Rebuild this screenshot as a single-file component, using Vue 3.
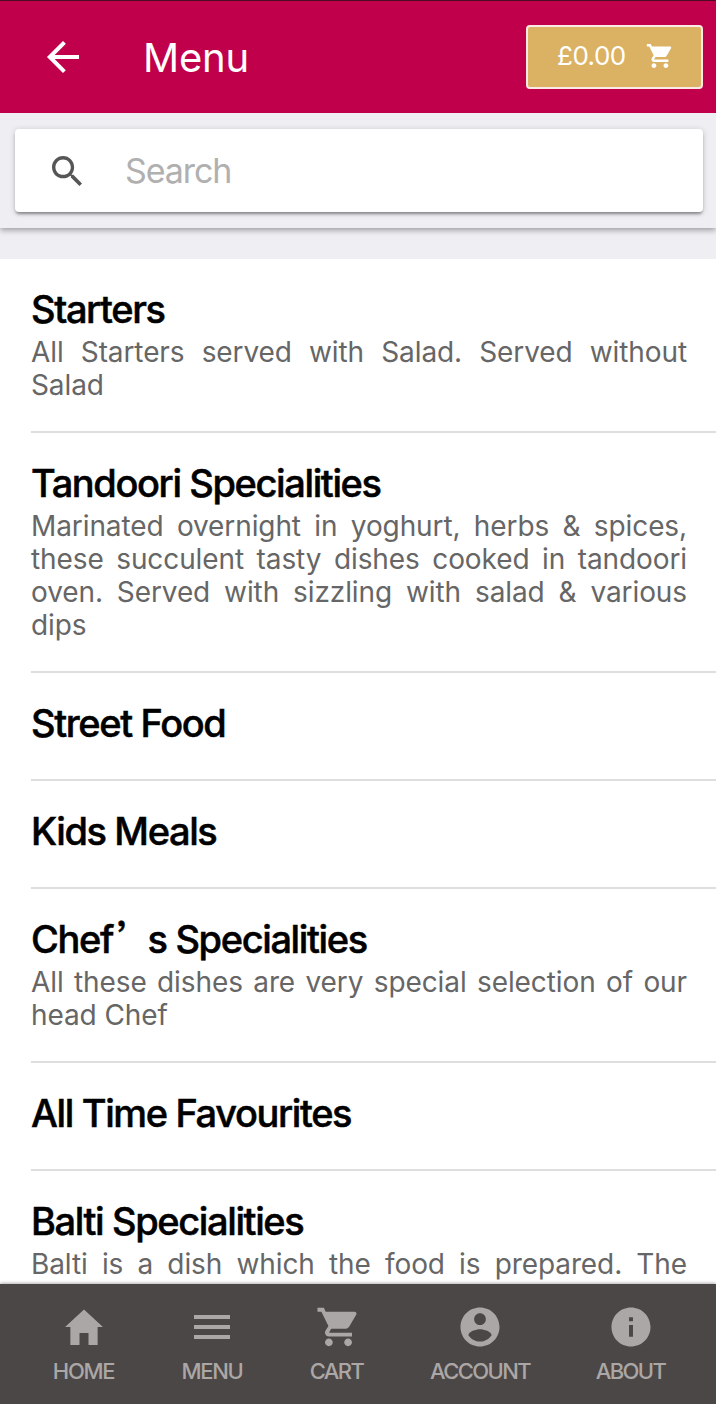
<template>
  <div class="page">
    <header class="header">
      <button class="back-btn" aria-label="Back">
        <svg viewBox="0 0 512 512"><path :d="icons.back" /></svg>
      </button>
      <h1>Menu</h1>
      <button class="cart-btn">
        <span>£0.00</span>
        <svg viewBox="0 0 512 512"><path :d="icons.cart" /></svg>
      </button>
    </header>

    <div class="search-area">
      <label class="search-box">
        <svg viewBox="0 0 512 512"><path :d="icons.search" /></svg>
        <input v-model="keyword" type="text" placeholder="Search" />
      </label>
    </div>

    <main class="content">
      <ul class="category-list">
        <li v-for="category in filteredCategories" :key="category.name">
          <h2>
            <template v-if="category.name.includes('’')"
              >{{ category.name.split("’")[0] }}<span class="quote">’</span
              >{{ category.name.split("’")[1] }}</template
            >
            <template v-else>{{ category.name }}</template>
          </h2>
          <p v-if="category.description" :class="{ full: category.full }">
            {{ category.description }}
          </p>
        </li>
      </ul>
    </main>

    <nav class="tab-bar">
      <button v-for="tab in tabs" :key="tab.label" :class="tab.icon">
        <svg viewBox="0 0 512 512"><path :d="icons[tab.icon]" /></svg>
        <span>{{ tab.label }}</span>
      </button>
    </nav>
  </div>
</template>

<script setup>
import { computed, ref } from "vue";

const keyword = ref("");

const icons = {
  back: "M427 234.625H167.296l119.702-119.702L256 85 85 256l171 171 29.922-29.924-118.626-119.701H427v-42.75z",
  search:
    "M337.509 305.372h-17.501l-6.571-5.486c20.791-25.232 33.922-57.054 33.922-93.257C347.358 127.632 283.896 64 205.135 64 127.452 64 64 127.632 64 206.629s63.452 142.628 142.225 142.628c35.011 0 67.831-13.167 92.991-34.008l6.561 5.487v17.551L415.18 448 448 415.086 337.509 305.372zm-131.284 0c-54.702 0-98.463-43.887-98.463-98.743 0-54.858 43.761-98.742 98.463-98.742 54.7 0 98.462 43.884 98.462 98.742 0 54.856-43.762 98.743-98.462 98.743z",
  home: "M208 448V320h96v128h97.6V256H458L256 68 54 256h56.4v192z",
  menu: "M64 384h384v-42.666H64V384zm0-106.666h384v-42.667H64v42.667zM64 128v42.665h384V128H64z",
  cart: "M169.6 377.6c-22.882 0-41.6 18.718-41.6 41.601 0 22.882 18.718 41.6 41.6 41.6s41.601-18.718 41.601-41.6c-.001-22.884-18.72-41.601-41.601-41.601zM48 51.2v41.6h41.6l74.883 151.682-31.308 50.954c-3.118 5.2-5.2 12.482-5.2 19.765 0 27.85 19.025 41.6 44.825 41.6H416v-40H177.893c-3.118 0-5.2-2.082-5.2-5.2 0-1.036 2.207-5.2 2.207-5.2l20.782-32.8h154.954c15.601 0 29.128-8.317 36.4-21.836l74.882-128.8c1.237-2.461 2.082-6.246 2.082-10.4 0-11.446-9.364-19.965-20.8-19.965H135.364L115.6 51.2H48zm326.399 326.4c-22.882 0-41.6 18.718-41.6 41.601 0 22.882 18.718 41.6 41.6 41.6S416 442.082 416 419.2c0-22.883-18.719-41.6-41.601-41.6z",
  account:
    "M256 48C141.1 48 48 141.1 48 256s93.1 208 208 208 208-93.1 208-208S370.9 48 256 48zm0 62.4c34.3 0 62.4 28.1 62.4 62.4s-28.1 62.4-62.4 62.4-62.4-28.1-62.4-62.4 28.1-62.4 62.4-62.4zm0 300.4c-51.9 0-97.8-27.1-123.9-67.8.6-41.6 82.9-64.2 123.9-64.2s123.3 22.7 123.9 64.2c-26.1 40.7-72 67.8-123.9 67.8z",
  about:
    "M256 48C141.2 48 48 141.2 48 256s93.2 208 208 208 208-93.2 208-208S370.8 48 256 48zm21 312h-42V235h42v125zm0-166h-42v-42h42v42z",
};

const categories = [
  {
    name: "Starters",
    description: "All Starters served with Salad. Served without Salad",
  },
  {
    name: "Tandoori Specialities",
    description:
      "Marinated overnight in yoghurt, herbs & spices, these succulent tasty dishes cooked in tandoori oven. Served with sizzling with salad & various dips",
  },
  { name: "Street Food" },
  { name: "Kids Meals" },
  {
    name: "Chef’s Specialities",
    description: "All these dishes are very special selection of our head Chef",
  },
  { name: "All Time Favourites" },
  {
    name: "Balti Specialities",
    description: "Balti is a dish which the food is prepared. The",
    full: true,
  },
];

const tabs = [
  { label: "HOME", icon: "home" },
  { label: "MENU", icon: "menu" },
  { label: "CART", icon: "cart" },
  { label: "ACCOUNT", icon: "account" },
  { label: "ABOUT", icon: "about" },
];

const filteredCategories = computed(() =>
  categories.filter((category) =>
    category.name.toLowerCase().includes(keyword.value.toLowerCase())
  )
);
</script>

<style>
body {
  margin: 0;
}
</style>

<style scoped>
.page {
  display: flex;
  flex-direction: column;
  height: 1404px;
  overflow: hidden;
  background: #fff;
  font-family: Inter, "Noto Sans CJK SC", sans-serif;
}
button {
  border: none;
  padding: 0;
  background: none;
  font-family: inherit;
  cursor: pointer;
}
svg {
  display: block;
  fill: currentColor;
}
.header {
  display: flex;
  align-items: center;
  flex: none;
  box-sizing: border-box;
  height: 113px;
  padding: 0 13px 0 39px;
  border-top: 1px solid #4d0a24;
  background: #c1004b;
  color: #fff;
}
.back-btn svg {
  width: 48px;
  height: 48px;
  color: #fff;
}
h1 {
  flex: 1;
  margin: 2px 0 0 56px;
  font-size: 40px;
  line-height: 48px;
  font-weight: 400;
  letter-spacing: -0.2px;
}
.cart-btn {
  display: flex;
  align-items: center;
  gap: 18px;
  box-sizing: border-box;
  width: 177px;
  height: 64px;
  padding: 0 0 3px 29px;
  border: 2px solid #fce9e4;
  border-radius: 4px;
  background: #dbb263;
  color: #fff;
  font-size: 26px;
  letter-spacing: -0.5px;
}
.cart-btn svg {
  width: 30px;
  height: 30px;
}
.search-area {
  flex: none;
  z-index: 1;
  box-sizing: border-box;
  height: 115px;
  padding: 16px 13px 16px 15px;
  background: #eeeef3;
  box-shadow: 0 2px 6px rgba(0, 0, 0, 0.36);
  clip-path: inset(0 0 -12px 0);
}
.search-box {
  display: flex;
  align-items: center;
  box-sizing: border-box;
  height: 83px;
  padding-left: 32px;
  border-radius: 4px;
  background: #fff;
  box-shadow: 0 3px 3px -1px rgba(0, 0, 0, 0.36),
    0 1px 6px rgba(0, 0, 0, 0.18);
  color: #565656;
}
.search-box svg {
  width: 40px;
  height: 40px;
}
.search-box input {
  width: 500px;
  margin-left: 38px;
  padding: 0;
  border: none;
  outline: none;
  background: none;
  font-family: inherit;
  font-size: 34px;
  letter-spacing: -1.1px;
}
.search-box input::placeholder {
  color: #b0b0b0;
}
.content {
  flex: 1;
  min-height: 0;
  overflow: hidden;
  padding-top: 31px;
  background: #eeeef3;
}
.category-list {
  margin: 0;
  padding: 0 0 0 31px;
  list-style: none;
  background: #fff;
}
.category-list li {
  padding: 26px 29px 29px 0;
  border-bottom: 2px solid #dedede;
}
h2 {
  margin: 0 0 3px;
  color: #000;
  font-size: 38px;
  line-height: 48px;
  font-weight: 500;
  letter-spacing: -1.38px;
  -webkit-text-stroke: 0.5px #000;
}
.quote {
  margin: 0 -6px 0 4px;
  font-family: "Noto Sans CJK SC", sans-serif;
  line-height: 1;
}
.category-list p {
  margin: 0;
  color: #666;
  font-size: 28px;
  line-height: 33px;
  letter-spacing: -0.1px;
  text-align: justify;
}
.category-list p.full {
  text-align-last: justify;
}
.tab-bar {
  display: flex;
  flex: none;
  z-index: 1;
  box-sizing: border-box;
  height: 120px;
  padding: 0 10px;
  background: #4b4746;
  box-shadow: 0 -1px 3px rgba(0, 0, 0, 0.3);
}
.tab-bar button {
  display: flex;
  flex-direction: column;
  align-items: center;
  flex: none;
  padding-top: 19px;
  color: #aba7a6;
  font-size: 22px;
  line-height: 28px;
  font-weight: 500;
  letter-spacing: -1.6px;
}
.tab-bar svg {
  width: 48px;
  height: 48px;
  margin-bottom: 6px;
}
.tab-bar .home {
  width: 147px;
}
.tab-bar .menu {
  width: 110px;
}
.tab-bar .home,
.tab-bar .menu {
  letter-spacing: -1.3px;
}
.tab-bar .cart {
  width: 139px;
}
.tab-bar .account {
  width: 148px;
}
.tab-bar .about {
  width: 153px;
}
</style>
